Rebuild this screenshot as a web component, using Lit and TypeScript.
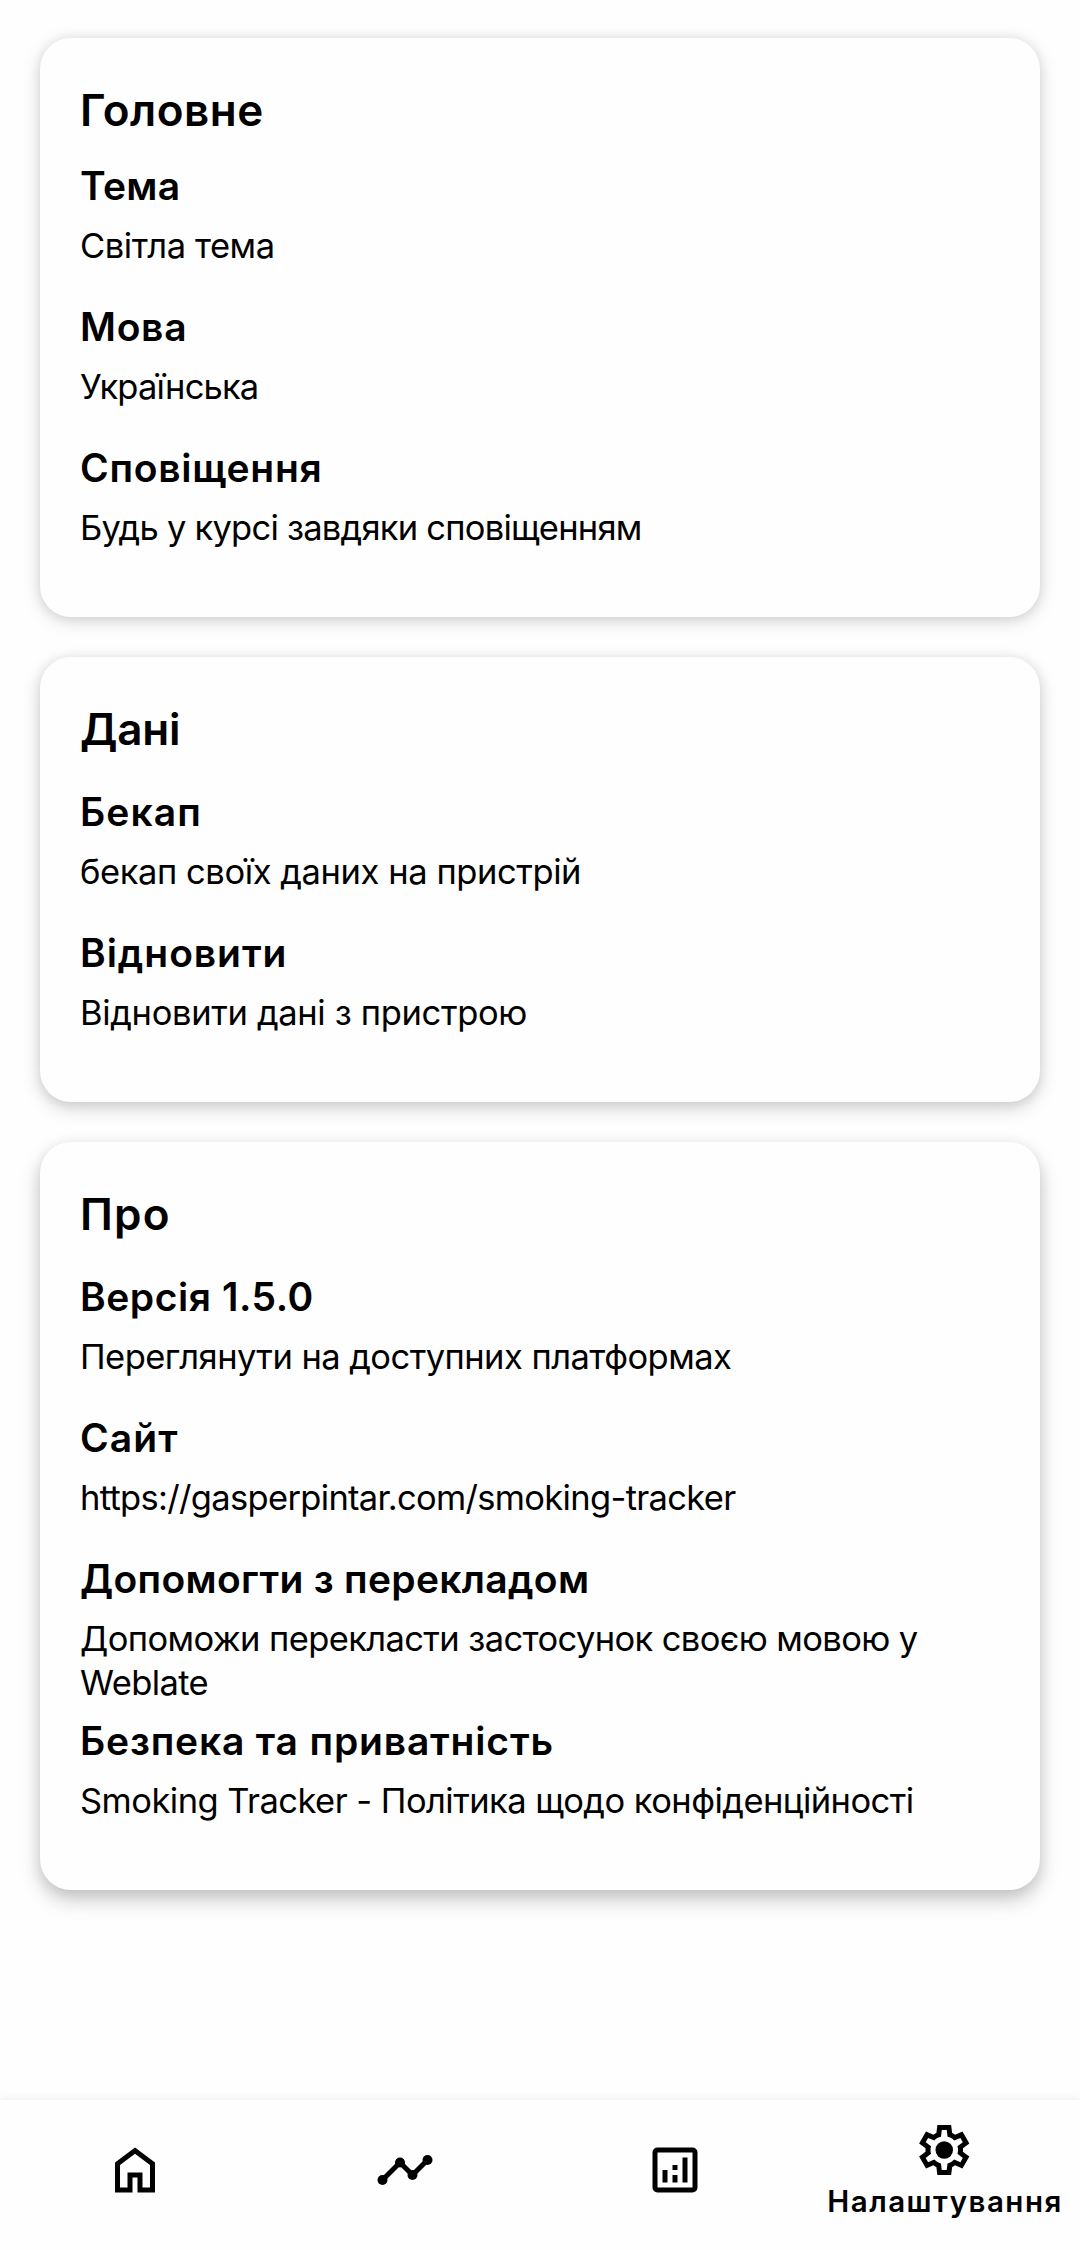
import { LitElement, html, css, svg, TemplateResult } from "lit";
import { customElement, property } from "lit/decorators.js";
import { classMap } from "lit/directives/class-map.js";

/** A line of text with its own letter spacing in pixels. */
interface Label {
  text: string;
  tracking: number;
}

interface SettingRow {
  title: Label;
  summary: Label;
}

interface Section {
  title: Label;
  compact?: boolean;
  rows: SettingRow[];
}

const label = (text: string, tracking: number): Label => ({ text, tracking });

const SECTIONS: Section[] = [
  {
    title: label("Головне", 0.55),
    compact: true,
    rows: [
      { title: label("Тема", 0.27), summary: label("Світла тема", -0.45) },
      { title: label("Мова", 0.7), summary: label("Українська", -0.85) },
      {
        title: label("Сповіщення", 0.72),
        summary: label("Будь у курсі завдяки сповіщенням", -0.76),
      },
    ],
  },
  {
    title: label("Дані", -0.2),
    rows: [
      { title: label("Бекап", 1.08), summary: label("бекап своїх даних на пристрій", -0.42) },
      { title: label("Відновити", 0.95), summary: label("Відновити дані з пристрою", -0.34) },
    ],
  },
  {
    title: label("Про", 1.3),
    rows: [
      {
        title: label("Версія 1.5.0", 0.55),
        summary: label("Переглянути на доступних платформах", -0.55),
      },
      {
        title: label("Сайт", 1.1),
        summary: label("https://gasperpintar.com/smoking-tracker", -0.68),
      },
      {
        title: label("Допомогти з перекладом", 0.3),
        summary: label("Допоможи перекласти застосунок своєю мовою у Weblate", -0.61),
      },
      {
        title: label("Безпека та приватність", 0.82),
        summary: label("Smoking Tracker - Політика щодо конфіденційності", -0.54),
      },
    ],
  },
];

interface NavItem {
  icon: TemplateResult;
  text?: string;
}

const NAV: NavItem[] = [
  {
    icon: svg`<path fill-rule="evenodd" d="M12 3 4 9v12h7v-6h2v6h7V9zM6 19v-9l6-4.5 6 4.5v9h-3v-6H9v6z"/>`,
  },
  {
    icon: svg`<path d="M3 16 10 9l5 5 6-6" fill="none" stroke="currentColor" stroke-width="2"/>
      <circle cx="3" cy="16" r="2"/><circle cx="10" cy="9" r="2"/>
      <circle cx="15" cy="14" r="2"/><circle cx="21" cy="8" r="2"/>`,
  },
  {
    icon: svg`<path fill-rule="evenodd" d="M5 3h14a2 2 0 0 1 2 2v14a2 2 0 0 1-2 2H5a2 2 0 0 1-2-2V5a2 2 0 0 1 2-2zM5 5v14h14V5z"/>
      <path d="M7 12h2v5H7zM11 10h2v2h-2zM11 14h2v3h-2zM15 7h2v10h-2z"/>`,
  },
  {
    text: "Налаштування",
    icon: svg`<g transform="translate(-.3 0)"><path d="m9.25 22-.4-3.2q-.325-.125-.612-.3-.288-.175-.563-.375L4.7 19.375l-2.75-4.75 2.575-1.95Q4.5 12.5 4.5 12.337v-.675q0-.162.025-.337L1.95 9.375l2.75-4.75 2.975 1.25q.275-.2.575-.375.3-.175.6-.3l.4-3.2h5.5l.4 3.2q.325.125.613.3.287.175.562.375l2.975-1.25 2.75 4.75-2.575 1.95q.025.175.025.337v.675q0 .163-.05.338l2.575 1.95-2.75 4.75-2.95-1.25q-.275.2-.575.375-.3.175-.6.3l-.4 3.2zM11 20h1.975l.35-2.65q.775-.2 1.438-.588.662-.387 1.212-.937l2.475 1.025.975-1.7-2.15-1.625q.125-.35.175-.737.05-.388.05-.788 0-.4-.05-.787-.05-.388-.175-.738l2.15-1.625-.975-1.7-2.475 1.05q-.55-.575-1.212-.963-.663-.387-1.438-.587L13 4h-1.975l-.35 2.65q-.775.2-1.437.587-.663.388-1.213.938L5.55 7.15l-.975 1.7 2.15 1.6q-.125.375-.175.75-.05.375-.05.8 0 .4.05.775.05.375.175.75l-2.15 1.625.975 1.7 2.475-1.05q.55.575 1.213.963.662.387 1.437.587z"/>
      <circle cx="12" cy="12" r="3.5"/></g>`,
  },
];

@customElement("settings-card")
export class SettingsCard extends LitElement {
  @property({ attribute: false }) section!: Section;

  static styles = css`
    :host {
      display: block;
      box-sizing: border-box;
      padding: 42px 40px 44px;
      border-radius: 31px;
      background: #fefefe;
    }
    .heading {
      font-size: 44px;
      line-height: 60px;
      font-weight: 600;
      margin-bottom: 17px;
    }
    .heading.compact {
      margin-bottom: 10px;
    }
    .row {
      box-sizing: border-box;
      min-height: 141px;
      padding-top: 11px;
      display: flex;
      flex-direction: column;
      gap: 13px;
    }
    .title {
      font-size: 39px;
      line-height: 50px;
      font-weight: 600;
    }
    .summary {
      font-size: 34.5px;
      line-height: 44px;
      font-weight: 400;
    }
  `;

  render() {
    const { title, compact = false, rows } = this.section;
    return html`
      <div class=${classMap({ heading: true, compact })} style="letter-spacing:${title.tracking}px">${title.text}</div>
      ${rows.map(
        (row) => html`
          <div class="row">
            <div class="title" style="letter-spacing:${row.title.tracking}px">${row.title.text}</div>
            <div class="summary" style="letter-spacing:${row.summary.tracking}px">${row.summary.text}</div>
          </div>
        `,
      )}
    `;
  }
}

@customElement("bottom-nav")
export class BottomNav extends LitElement {
  static styles = css`
    :host {
      display: grid;
      grid-template-columns: repeat(4, 1fr);
      height: 150px;
      background: #fefefe;
      box-shadow: 0 0 9px rgba(0, 0, 0, 0.08);
    }
    .item {
      display: flex;
      flex-direction: column;
      align-items: center;
      padding-top: 40px;
    }
    .item.active {
      padding-top: 20px;
    }
    svg {
      display: block;
      width: 60px;
      height: 60px;
      fill: currentColor;
    }
    .text {
      font-size: 29.5px;
      line-height: 42px;
      font-weight: 600;
      letter-spacing: 1.5px;
      white-space: nowrap;
    }
  `;

  render() {
    return NAV.map(
      (item) => html`
        <div class=${classMap({ item: true, active: !!item.text })}>
          <svg viewBox="0 0 24 24">${item.icon}</svg>
          ${item.text ? html`<div class="text">${item.text}</div>` : null}
        </div>
      `,
    );
  }
}

@customElement("app-root")
export class AppRoot extends LitElement {
  static styles = css`
    :host {
      display: flex;
      flex-direction: column;
      height: 2250px;
      overflow: hidden;
      background: #fefefe;
      color: #000;
      font-family: Inter, "Noto Sans", sans-serif;
    }
    .content {
      flex: 1;
      display: flex;
      flex-direction: column;
      gap: 40px;
      padding: 38px 40px 0;
    }
    .depth-0 {
      box-shadow: 0 4px 18px rgba(0, 0, 0, 0.15), 0 1px 12px rgba(0, 0, 0, 0.08);
    }
    .depth-1 {
      box-shadow: 0 6px 18px rgba(0, 0, 0, 0.18), 0 1px 12px rgba(0, 0, 0, 0.07);
    }
    .depth-2 {
      box-shadow: 0 10px 20px rgba(0, 0, 0, 0.21), 0 2px 14px rgba(0, 0, 0, 0.07);
    }
  `;

  render() {
    return html`
      <div class="content">
        ${SECTIONS.map(
          (section, i) => html`<settings-card class="depth-${i}" .section=${section}></settings-card>`,
        )}
      </div>
      <bottom-nav></bottom-nav>
    `;
  }
}
